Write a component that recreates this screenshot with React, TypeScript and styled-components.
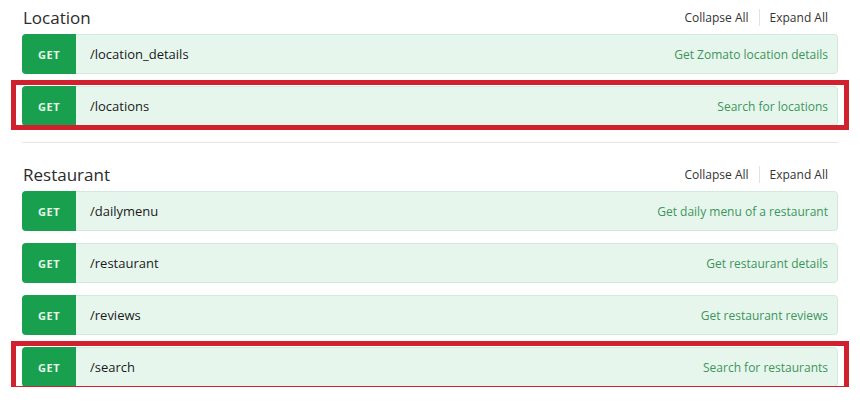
import styled, { createGlobalStyle } from 'styled-components';

const GlobalStyle = createGlobalStyle`
  * { box-sizing: border-box; }
  body {
    margin: 0;
    background: #ffffff;
    font-family: "Open Sans", "Noto Sans", "Liberation Sans", sans-serif;
    color: #222;
  }
`;

const Page = styled.div`
  width: 860px;
  padding: 0 22px;
`;

const Section = styled.section<{ $divided?: boolean }>`
  border-top: ${({ $divided }) => ($divided ? '1px solid #e6e6e6' : 'none')};
  margin-top: ${({ $divided }) => ($divided ? '16px' : '0')};
  padding-top: ${({ $divided }) => ($divided ? '14px' : '0')};
`;

const Header = styled.div`
  height: 34px;
  display: flex;
  align-items: center;
  justify-content: space-between;
`;

const Title = styled.h2`
  margin: 0;
  padding-left: 1px;
  font-size: 17px;
  font-weight: 500;
  color: #2b2b2b;
`;

const Controls = styled.div`
  display: flex;
  align-items: center;
  padding-right: 10px;
  font-size: 12px;
  color: #333;
`;

const ControlLink = styled.span`
  cursor: pointer;
  padding: 0 10px;
  &:last-child {
    padding-right: 0;
    border-left: 1px solid #e2e2e2;
  }
`;

const List = styled.div`
  display: flex;
  flex-direction: column;
  gap: 12px;
`;

const Row = styled.div<{ $highlight?: boolean }>`
  position: relative;
  height: 40px;
  display: flex;
  align-items: stretch;
  background: #e7f6ed;
  border: 1px solid #d2eadb;
  border-radius: 4px;

  ${({ $highlight }) =>
    $highlight &&
    `
    &::after {
      content: '';
      position: absolute;
      top: -7px;
      left: -12px;
      right: -12px;
      bottom: -5px;
      border: 5px solid #d1202e;
      pointer-events: none;
    }
  `}
`;

const Method = styled.div`
  width: 54px;
  margin: -1px 0 -1px -1px;
  display: flex;
  align-items: center;
  justify-content: center;
  background: #18a04f;
  border-radius: 4px 0 0 4px;
  color: #e6f7ec;
  font-size: 11px;
  font-weight: 700;
  letter-spacing: 0.5px;
`;

const Path = styled.div`
  flex: 1;
  display: flex;
  align-items: center;
  padding-left: 14px;
  font-size: 13px;
  font-weight: 500;
  color: #1a1a1a;
`;

const Summary = styled.div`
  display: flex;
  align-items: center;
  padding-right: 9px;
  font-size: 12px;
  color: #3d955c;
`;

interface IEndpoint {
  path: string;
  summary: string;
  highlight?: boolean;
}

interface IGroup {
  name: string;
  endpoints: IEndpoint[];
}

const groups: IGroup[] = [
  {
    name: 'Location',
    endpoints: [
      { path: '/location_details', summary: 'Get Zomato location details' },
      { path: '/locations', summary: 'Search for locations', highlight: true },
    ],
  },
  {
    name: 'Restaurant',
    endpoints: [
      { path: '/dailymenu', summary: 'Get daily menu of a restaurant' },
      { path: '/restaurant', summary: 'Get restaurant details' },
      { path: '/reviews', summary: 'Get restaurant reviews' },
      { path: '/search', summary: 'Search for restaurants', highlight: true },
    ],
  },
];

export default function App() {
  return (
    <>
      <GlobalStyle />
      <Page>
        {groups.map((group, i) => (
          <Section key={group.name} $divided={i > 0}>
            <Header>
              <Title>{group.name}</Title>
              <Controls>
                <ControlLink>Collapse All</ControlLink>
                <ControlLink>Expand All</ControlLink>
              </Controls>
            </Header>
            <List>
              {group.endpoints.map((ep) => (
                <Row key={ep.path} $highlight={ep.highlight}>
                  <Method>GET</Method>
                  <Path>{ep.path}</Path>
                  <Summary>{ep.summary}</Summary>
                </Row>
              ))}
            </List>
          </Section>
        ))}
      </Page>
    </>
  );
}
